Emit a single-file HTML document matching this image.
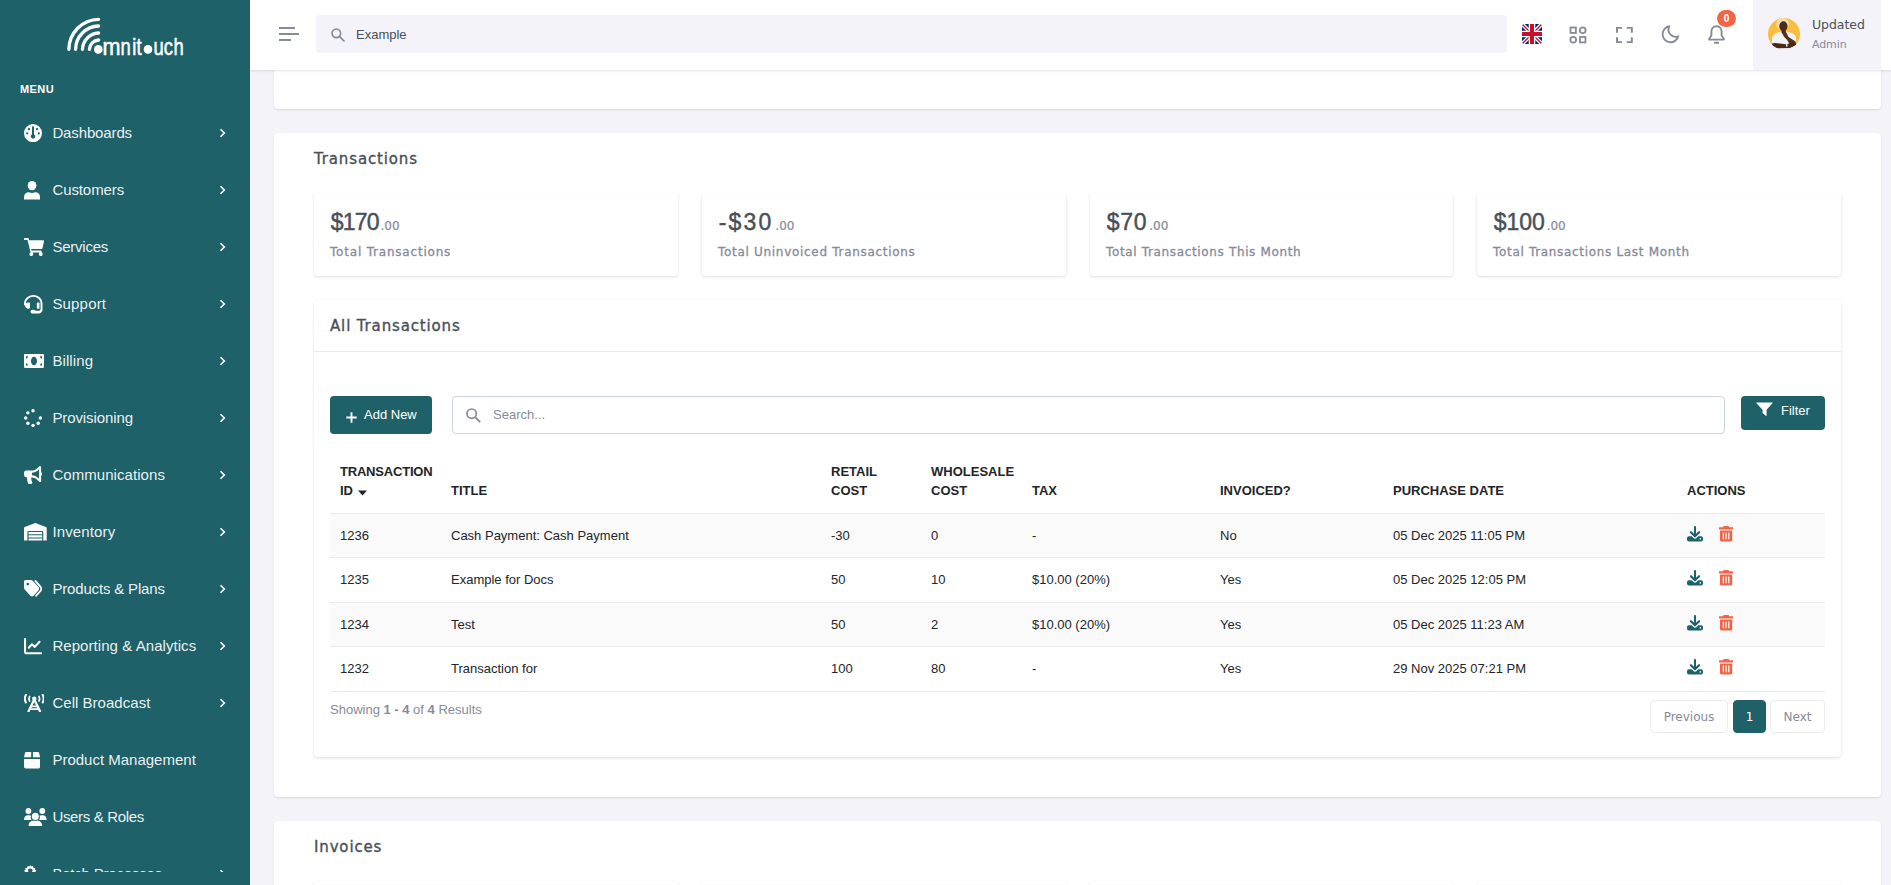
<!DOCTYPE html>
<html lang="en">
<head>
<meta charset="utf-8">
<title>Omnitouch - Transactions</title>
<style>
*{box-sizing:border-box}
html,body{margin:0;padding:0}
html{width:1891px;height:885px;overflow:hidden}
body{width:1891px;height:885px;overflow:hidden;background:#f3f3f9;font-family:"Liberation Sans",Arial,sans-serif;font-size:13px;color:#212529;position:relative}
.pop{font-family:"DejaVu Sans","Liberation Sans",sans-serif}
/* ---------- sidebar ---------- */
#sidebar{position:absolute;left:0;top:0;width:250px;height:885px;background:#1f6169;overflow:hidden;z-index:5}
#logo{position:absolute;left:62px;top:12px;width:126px;height:50px}
#menu-title{position:absolute;left:20px;top:83px;font-size:11px;font-weight:700;letter-spacing:.4px;color:#fff;line-height:13px}
.nav{position:absolute;left:0;width:250px;height:24px}
.nav svg.ic{position:absolute;fill:#fff}
.nav span{position:absolute;left:52.400px;top:-.2px;line-height:24px;font-size:15px;color:rgba(255,255,255,.93);white-space:nowrap}
.nav svg.ch{position:absolute;left:218px;top:7px;width:9px;height:10px;fill:none;stroke:#fff;stroke-width:1.6}
/* ---------- topbar ---------- */
#topbar{position:absolute;left:250px;top:0;width:1641px;height:70px;background:#fff;box-shadow:0 1px 2px rgba(56,65,74,.15);z-index:4}
#ham{position:absolute;left:29px;top:27px;width:20px;height:14px}
#ham i{position:absolute;left:0;height:2px;background:#878a99;display:block}
#search{position:absolute;left:66px;top:15px;width:1191px;height:38px;background:#f3f3f9;border-radius:4px}
#search svg{position:absolute;left:14px;top:11.500px;width:16px;height:16px}
#search span{position:absolute;left:40px;top:1px;line-height:38px;font-size:13px;color:#495057}
.tb-ic{position:absolute;top:23px;width:24px;height:24px;fill:none;stroke:#878a99;stroke-width:2}
#user{position:absolute;left:1503px;top:0;width:128px;height:70px;background:#f3f3f9}
#avatar{position:absolute;left:15px;top:18px;width:32px;height:32px;border-radius:50%;overflow:hidden}
#uname{position:absolute;left:59px;top:16px;font-size:12.500px;line-height:18px;color:#495057;letter-spacing:-.05px}
#urole{position:absolute;left:59px;top:36.700px;font-size:11px;line-height:16px;color:#878a99;letter-spacing:-.1px}
#badge{position:absolute;left:1467px;top:9.500px;width:19px;height:17px;border-radius:9px;background:#f06548;color:#fff;font-size:10px;font-weight:700;text-align:center;line-height:17px}
/* ---------- content ---------- */
.card{position:absolute;background:#fff;border-radius:4px;box-shadow:0 1px 2px rgba(56,65,74,.15)}
.h5{position:absolute;font-size:15px;line-height:24px;color:#495057;letter-spacing:.85px;white-space:nowrap;-webkit-text-stroke:.35px #495057}
.stat{position:absolute;top:193px;width:364px;height:83px;background:#fff;border-radius:4px;box-shadow:0 1px 3px rgba(56,65,74,.18)}
.stat .v{position:absolute;left:16.700px;top:14px;font-family:'Liberation Sans',sans-serif;font-size:23px;line-height:30px;color:#495057;white-space:nowrap;letter-spacing:-.8px;-webkit-text-stroke:.45px #495057}
.stat .v small{font-family:'DejaVu Sans',sans-serif;font-size:12px;color:#878a99;letter-spacing:0;-webkit-text-stroke:.2px #878a99;margin-left:1.800px}
.stat .l{position:absolute;left:16px;top:50px;font-size:12px;line-height:18px;color:#878a99;white-space:nowrap;letter-spacing:.8px;-webkit-text-stroke:.3px #878a99}
.btn{position:absolute;background:#1f6169;color:#fff;border-radius:4px;font-size:13px;white-space:nowrap}
table{position:absolute;left:330px;top:452px;width:1495px;border-collapse:separate;border-spacing:0;table-layout:fixed}
th{font-weight:700;font-size:13px;text-align:left;vertical-align:bottom;padding:10px 10px 13px 10px;line-height:19px;height:62px;color:#212529;border-bottom:1px solid #e9ebec}
td{font-size:13px;padding:0 10px;height:44px;line-height:19px;vertical-align:middle;color:#212529;border-bottom:1px solid #e9ebec;white-space:nowrap}
tbody tr:nth-child(odd) td{background:#fafafa}
tbody tr:nth-child(even) td{height:45px}
td svg{vertical-align:middle;position:relative;top:-2.400px}
td svg.dl{margin-left:.2px}
td svg.trs{margin-left:16.100px}
tbody tr:nth-child(even) td{padding-bottom:1px}
.pg{position:absolute;top:700px;height:33px;border:1px solid #e9ebec;border-radius:4px;line-height:33px;text-align:center;font-size:12px;color:#878a99;background:#fff}
</style>
</head>
<body>

<!-- ================= SIDEBAR ================= -->
<div id="sidebar">
  <svg id="logo" viewBox="62 12 126 50" role="img" aria-label="omnitouch">
    <g fill="none" stroke="#fff" stroke-width="3.3" stroke-linecap="round">
      <path d="M68.900 49.300A30.200 30.200 0 0 1 98.600 19.300"/>
      <path d="M75.600 49.300A23.600 23.600 0 0 1 98.600 26"/>
      <path d="M82.500 49.300A16.800 16.800 0 0 1 98.600 33"/>
      <path d="M89.400 49.300A9.800 9.800 0 0 1 98.600 40"/>
    </g>
    <g transform="translate(94,54.600) scale(0.8,1)"><text font-family="Liberation Sans, sans-serif" font-size="23" fill="#fff" stroke="#fff" stroke-width=".550" stroke-linejoin="round"><tspan x="1.9" font-size="10" dy="-2">o</tspan><tspan x="10.7" dy="2" textLength="22.500" lengthAdjust="spacingAndGlyphs">m</tspan><tspan x="33.2">n</tspan><tspan x="47.7">i</tspan><tspan x="53.0">t</tspan><tspan x="64.0" font-size="10" dy="-2">o</tspan><tspan x="74.4" dy="2">u</tspan><tspan x="87.3">c</tspan><tspan x="99.4">h</tspan></text></g>
    <circle cx="98.300" cy="49.400" r="4.300" fill="#fff"/>
    <circle cx="148" cy="49.400" r="4.300" fill="#fff"/>
  </svg>
  <div id="menu-title">MENU</div>
  <div class="nav" style="top:121px"><svg class="ic" style="left:24px;top:3px;width:18px;height:18.3px" viewBox="1 1 18 18" preserveAspectRatio="none"><path fill-rule="evenodd" d="M10 1a9 9 0 1 0 0 18a9 9 0 0 0 0-18zM9 4.2a1 1 0 0 1 2 0v7.1a2.1 2.1 0 1 1-2 0zM4.2 9.2a1.1 1.1 0 1 1 0 2.2a1.1 1.1 0 0 1 0-2.2zM15.8 9.2a1.1 1.1 0 1 1 0 2.2a1.1 1.1 0 0 1 0-2.2zM6 5a1.1 1.1 0 1 1 0 2.2A1.1 1.1 0 0 1 6 5zM14 5a1.1 1.1 0 1 1 0 2.2A1.1 1.1 0 0 1 14 5z"/></svg><span style="letter-spacing:-0.13px">Dashboards</span><svg class="ch" viewBox="0 0 9 10"><path d="M2.500 1.200L6.300 5L2.500 8.800"/></svg></div>
  <div class="nav" style="top:178px"><svg class="ic" style="left:24px;top:3px;width:16.1px;height:18.6px" viewBox="2 1.3 16 17.3" preserveAspectRatio="none"><circle cx="10" cy="5.6" r="4.3"/><path d="M2 18.6v-2.2c0-2.6 2-4.6 4.6-4.6h.6c.9.4 1.800.6 2.800.6s1.900-.2 2.800-.6h.6c2.600 0 4.600 2 4.600 4.600v2.200z"/></svg><span style="letter-spacing:-0.09px">Customers</span><svg class="ch" viewBox="0 0 9 10"><path d="M2.500 1.200L6.300 5L2.500 8.800"/></svg></div>
  <div class="nav" style="top:235px"><svg class="ic" style="left:24px;top:3px;width:20px;height:18.1px" viewBox="0 2.6 20.02 16.6" preserveAspectRatio="none"><path d="M0.700 2.600h3.300c.4 0 .7.3.8.6l.3 1.400h14.100c.5 0 .9.500.8 1l-1.500 6.400c-.1.400-.4.600-.8.600H7.200l.3 1.500h9.400c.5 0 .9.500.8 1l-.1.500c.7.300 1.100 1 1.100 1.700 0 1-.800 1.900-1.900 1.900s-1.900-.800-1.900-1.900c0-.500.200-1 .6-1.300H8.700c.4.300.6.800.6 1.300 0 1-.800 1.900-1.900 1.900s-1.900-.800-1.900-1.900c0-.700.400-1.300 1-1.600L3.500 4.500H.7c-.4 0-.7-.3-.7-.7v-.5c0-.4.300-.7.700-.7z"/></svg><span style="letter-spacing:-0.23px">Services</span><svg class="ch" viewBox="0 0 9 10"><path d="M2.500 1.200L6.300 5L2.500 8.800"/></svg></div>
  <div class="nav" style="top:292px"><svg class="ic" style="left:24px;top:3.2px;width:18.5px;height:18.5px" viewBox="1 1.2 17.8 19.2" preserveAspectRatio="none"><path fill-rule="evenodd" d="M10 1.200C5 1.200 1.200 5.200 1 10v1.200c0 .3.100.5.400.6l.7.400v.1c0 1.700 1.400 3.100 3.100 3.100h.600c.5 0 .9-.4.900-.9V9.900c0-.5-.4-.9-.9-.9h-.600c-.9 0-1.700.400-2.300 1C3.100 6.200 6.200 3.100 10 3.100s6.900 3.100 6.900 6.900v5.600c0 1-.8 1.900-1.900 1.900h-3c-.3-.6-.9-.9-1.600-.9h-1.200c-1 0-1.900.800-1.900 1.900s.800 1.900 1.900 1.900H15c2.100 0 3.800-1.700 3.800-3.800V10C18.800 5.200 15 1.200 10 1.200zM13.300 9.900v4.600c0 .5.400.9.900.9h.6c.4 0 .700-.100 1.100-.200V9.200c-.3-.100-.700-.200-1.100-.200h-.6c-.5 0-.9.400-.9.900z"/></svg><span style="letter-spacing:0.18px">Support</span><svg class="ch" viewBox="0 0 9 10"><path d="M2.500 1.200L6.300 5L2.500 8.800"/></svg></div>
  <div class="nav" style="top:349px"><svg class="ic" style="left:24px;top:5.4px;width:20px;height:13.9px" viewBox="0 4 20 12" preserveAspectRatio="none"><path fill-rule="evenodd" d="M1 4h18c.6 0 1 .4 1 1v10c0 .6-.4 1-1 1H1c-.6 0-1-.4-1-1V5c0-.6.400-1 1-1zM2 12v2h2c0-1.100-.900-2-2-2zM2 6v2c1.100 0 2-.900 2-2zM18 12c-1.100 0-2 .900-2 2h2zM16 6c0 1.100.900 2 2 2V6zM10 6.300c-1.700 0-3 1.700-3 3.700s1.300 3.700 3 3.700 3-1.700 3-3.700-1.300-3.700-3-3.700z"/></svg><span style="letter-spacing:0.1px">Billing</span><svg class="ch" viewBox="0 0 9 10"><path d="M2.500 1.200L6.300 5L2.500 8.800"/></svg></div>
  <div class="nav" style="top:406px"><svg class="ic" style="left:24px;top:3.1px;width:18.1px;height:18.1px" viewBox="1.1 1.1 17.8 17.8" preserveAspectRatio="none"><circle cx="10" cy="2.800" r="1.700"/><circle cx="10" cy="17.200" r="1.700"/><circle cx="2.800" cy="10" r="1.700"/><circle cx="17.200" cy="10" r="1.700"/><circle cx="4.900" cy="4.900" r="1.700"/><circle cx="15.100" cy="15.100" r="1.700"/><circle cx="4.900" cy="15.100" r="1.700"/></svg><span style="letter-spacing:-0.09px">Provisioning</span><svg class="ch" viewBox="0 0 9 10"><path d="M2.500 1.200L6.300 5L2.500 8.800"/></svg></div>
  <div class="nav" style="top:463px"><svg class="ic" style="left:24px;top:3.1px;width:18.1px;height:17.9px" viewBox="0 1.2 19.8 17.5" preserveAspectRatio="none"><path d="M19.800 8.900c0-.8-.5-1.500-1.100-1.900V2.300c0-.3-.2-1.100-1.100-1.100-.2 0-.5.100-.7.200l-2.900 2.400C12.500 4.900 10.600 5.600 8.700 5.600H2.200C1 5.600 0 6.600 0 7.800v2.200c0 1.200 1 2.200 2.200 2.200h1.200c0 .4-.1.700-.1 1.100 0 1.700.4 3.300 1.100 4.800.2.400.6.600 1 .6h2.600c.9 0 1.400-1 .9-1.800-.6-.9-1-2.100-1-3.400 0-.4.100-.8.100-1.100h.7c1.900 0 3.800.7 5.300 1.900l2.900 2.400c.2.200.4.200.7.200.9 0 1.100-.8 1.100-1.100v-4.900c.7-.4 1.100-1.100 1.100-1.900zm-3.300 4.700l-1.100-.9c-1.900-1.500-4.300-2.400-6.700-2.400V7.800c2.400 0 4.800-.9 6.700-2.400l1.100-.9z"/></svg><span style="letter-spacing:0.06px">Communications</span><svg class="ch" viewBox="0 0 9 10"><path d="M2.500 1.200L6.300 5L2.500 8.800"/></svg></div>
  <div class="nav" style="top:520px"><svg class="ic" style="left:24px;top:3.1px;width:22.7px;height:17.6px" viewBox="0 1.45 20.0 16.55" preserveAspectRatio="none"><path d="M15.700 10H4.300c-.2 0-.3.100-.3.300v1.700h12v-1.700c0-.2-.1-.3-.3-.3zM16 13H4v2h12zM16 16H4v2h12zM19.400 5.200L10.600 1.600c-.4-.2-.8-.2-1.200 0L.6 5.200C.2 5.400 0 5.800 0 6.200v11.500c0 .2.100.3.300.3h2.400c.2 0 .3-.1.300-.3V10c0-.6.500-1 1-1h12c.6 0 1 .5 1 1v7.700c0 .2.100.3.300.3h2.400c.2 0 .3-.1.300-.3V6.200c0-.400-.2-.800-.6-1z"/></svg><span style="letter-spacing:0.14px">Inventory</span><svg class="ch" viewBox="0 0 9 10"><path d="M2.500 1.200L6.300 5L2.500 8.800"/></svg></div>
  <div class="nav" style="top:577px"><svg class="ic" style="left:24px;top:3.4px;width:18.1px;height:16.8px" viewBox="0 0 20.12 17.2" preserveAspectRatio="none"><path fill-rule="evenodd" d="M0 1.800C0 .8.800 0 1.800 0h6.100c.7 0 1.300.3 1.800.7l6.300 6.400c1 1 1 2.600 0 3.600l-5.300 5.300c-1 1-2.600 1-3.600 0L.8 9.700C.3 9.200 0 8.600 0 7.900zM4.200 5.600a1.400 1.400 0 1 0 0-2.800 1.400 1.400 0 0 0 0 2.800z"/><path d="M12 .3c.4-.4 1-.4 1.400 0l5.600 5.900c1.500 1.600 1.500 4 0 5.600l-4.900 5.100c-.4.400-1 .4-1.400 0s-.4-1 0-1.400l4.900-5.100c.8-.8.800-2 0-2.800L12 1.700c-.4-.4-.4-1 0-1.400z"/></svg><span style="letter-spacing:-0.17px">Products &amp; Plans</span><svg class="ch" viewBox="0 0 9 10"><path d="M2.500 1.200L6.300 5L2.500 8.800"/></svg></div>
  <div class="nav" style="top:634px"><svg class="ic" style="left:24px;top:4.3px;width:18.1px;height:16.3px" viewBox="-0.05 0.35 20.2 18.2" preserveAspectRatio="none"><path d="M1.100 1.500V15.300Q1.100 17.400 3.200 17.400H19" fill="none" stroke="#fff" stroke-width="2.300" stroke-linecap="round" stroke-linejoin="round"/><path d="M5.300 11.200L8.800 7.400L12 10.300L17.300 4.600" fill="none" stroke="#fff" stroke-width="2.300" stroke-linecap="round" stroke-linejoin="round"/></svg><span style="letter-spacing:0.06px">Reporting &amp; Analytics</span><svg class="ch" viewBox="0 0 9 10"><path d="M2.500 1.200L6.300 5L2.500 8.800"/></svg></div>
  <div class="nav" style="top:691px"><svg class="ic" style="left:23.900px;top:2.900px;width:20.600px;height:18.400px" viewBox="0 0 20.600 18.400"><g fill="none" stroke="#fff" stroke-linecap="round"><path d="M1.900 1Q-.2 4.700 1.900 8.400M18.700 1Q20.800 4.700 18.700 8.400" stroke-width="2.100"/><path d="M5.600 2.400Q4.300 4.700 5.600 7M15 2.400Q16.300 4.700 15 7" stroke-width="1.700"/><path d="M10.300 5.500L4.600 17.300M10.300 5.500L16 17.300" stroke-width="2.300"/><path d="M7.400 12.300H13.200M5.900 15.200H14.700" stroke-width="1.700"/></g><circle cx="10.300" cy="4.700" r="2.200"/></svg><span style="letter-spacing:0.03px">Cell Broadcast</span><svg class="ch" viewBox="0 0 9 10"><path d="M2.500 1.200L6.300 5L2.500 8.800"/></svg></div>
  <div class="nav" style="top:748px"><svg class="ic" style="left:24px;top:4px;width:16.1px;height:16.6px" viewBox="0 0 20 20" preserveAspectRatio="none"><path d="M2.600 0H8.900V6.300H0L1.200 1.200Q1.500 0 2.600 0ZM11.100 0H17.400Q18.500 0 18.800 1.200L20 6.300H11.100ZM0 8.500H20V17.500Q20 20 17.500 20H2.500Q0 20 0 17.500Z"/></svg><span style="letter-spacing:0px">Product Management</span></div>
  <div class="nav" style="top:805px"><svg class="ic" style="left:24px;top:2.9px;width:22.7px;height:18.3px" viewBox="0 0.4 22.7 17.9" preserveAspectRatio="none"><circle cx="4.400" cy="3.300" r="2.900"/><circle cx="18.300" cy="3.300" r="2.900"/><path d="M0 11.600C0 9 1.900 7.500 4 7.500h1.300c.7 0 1.400.2 2 .5-.9 1.400-.6 3 .4 4.200H.900C.4 12.200 0 12 0 11.600z"/><path d="M22.700 11.600c0-2.600-1.900-4.100-4-4.100h-1.300c-.7 0-1.400.2-2 .5.900 1.400.6 3-.4 4.200h6.800c.5 0 .9-.2.900-.6z"/><circle cx="11.350" cy="8.600" r="3.500"/><path d="M4.600 17.400c0-2.600 2.100-4.500 4.700-4.500h4.100c2.600 0 4.700 1.900 4.700 4.500 0 .5-.4.900-.9.900H5.500c-.5 0-.9-.4-.9-.9z"/></svg><span style="letter-spacing:-0.34px">Users &amp; Roles</span></div>
  <div class="nav" style="top:862px"><svg class="ic" style="left:24px;top:3.2px;width:12.500px;height:13.500px" viewBox="2.1 2 15.8 19.3" preserveAspectRatio="none"><path d="M10 2l1 2.200 2.300-.8.600 2.400 2.400.4-.5 2.300 2.100 1.200-1.400 2 1.400 2-2.100 1.100.5 2.400-2.400.4-.6 2.300-2.300-.7-1 2.100-1-2.100-2.300.7-.6-2.300-2.400-.4.500-2.400-2.100-1.100 1.400-2-1.400-2 2.100-1.200-.5-2.300 2.400-.4.600-2.400 2.300.8zM10 7a3 3 0 1 0 0 6 3 3 0 0 0 0-6z" fill-rule="evenodd"/></svg><span style="letter-spacing:-.2px">Batch Processes</span><svg class="ch" viewBox="0 0 9 10"><path d="M2.500 1.200L6.300 5L2.500 8.800"/></svg></div>
  <div style="position:absolute;left:0;top:872px;width:250px;height:13px;background:#1f6169"></div>
</div>

<!-- ================= TOPBAR ================= -->
<div id="topbar">
  <div id="ham"><i style="top:0;width:16px"></i><i style="top:6px;width:20px"></i><i style="top:12px;width:12px"></i></div>
  <div id="search">
    <svg viewBox="0 0 24 24"><circle cx="9.5" cy="9.5" r="6.5" fill="none" stroke="#878a99" stroke-width="2.4"/><path d="M14.5 14.5 L21 21" stroke="#878a99" stroke-width="2.6" stroke-linecap="round"/></svg>
    <span>Example</span>
  </div>
  <svg style="position:absolute;left:1272px;top:24px;width:20px;height:20px;border-radius:3px" viewBox="0 0 20 20">
    <rect width="20" height="20" fill="#012169"/>
    <path d="M0 0L20 20M20 0L0 20" stroke="#fff" stroke-width="4"/>
    <path d="M0 0L20 20M20 0L0 20" stroke="#c8102e" stroke-width="1.400"/>
    <path d="M10 0V20M0 10H20" stroke="#fff" stroke-width="6.600"/>
    <path d="M10 0V20M0 10H20" stroke="#c8102e" stroke-width="4"/>
  </svg>
  <svg style="position:absolute;left:1319px;top:26px;width:18px;height:18px" viewBox="0 0 18 18" fill="none" stroke="#878a99" stroke-width="1.800">
    <rect x="1.500" y="1.500" width="5.400" height="5.400"/><circle cx="13.700" cy="4.200" r="2.900"/><circle cx="4.200" cy="13.700" r="2.900"/><rect x="11" y="11" width="5.400" height="5.400"/>
  </svg>
  <svg style="position:absolute;left:1365px;top:26px;width:18.800px;height:18px" viewBox="0 0 18 18" preserveAspectRatio="none" fill="none" stroke="#878a99" stroke-width="1.900">
    <path d="M1.900 6.800V1.900H6.800M11.200 1.900H16.100V6.800M16.100 11.200V16.100H11.200M6.800 16.100H1.900V11.200"/>
  </svg>
  <svg style="position:absolute;left:1410px;top:24px;width:20px;height:20px" viewBox="0 0 20 20" fill="none" stroke="#878a99" stroke-width="1.900" stroke-linejoin="round">
    <path d="M9.300 2.300A8 8 0 1 0 18.300 12.300A7.200 7.200 0 0 1 9.300 2.300Z"/>
  </svg>
  <svg style="position:absolute;left:1457px;top:24px;width:19px;height:21px" viewBox="0 0 19 21" fill="none" stroke="#878a99" stroke-width="1.900" stroke-linejoin="round" stroke-linecap="round">
    <path d="M9.500 2.200C6.200 2.200 4.400 4.700 4.400 7.600V11.500L2.200 14.800V15.600H16.800V14.800L14.600 11.500V7.600C14.600 4.700 12.800 2.200 9.500 2.200Z"/>
    <path d="M7.800 18.700H11.200"/>
  </svg>
  <div id="user">
    <div id="avatar"><svg viewBox="0 0 32 32" width="32" height="32"><rect width="32" height="32" fill="#fabd3d"/><ellipse cx="14.600" cy="6" rx="6.300" ry="6.200" fill="#f2deb6"/><ellipse cx="15.400" cy="8.200" rx="4.100" ry="5" fill="#4b2b1b"/><path d="M4 32V21Q4.300 16 9.500 14.800L13 13.800H19L23 14.800Q27.800 16 28.200 21V32Z" fill="#f3f3f6"/><path d="M13.600 12H17.800V15Q15.700 17 13.600 15Z" fill="#4b2b1b"/><path d="M14.300 13.800Q16.800 12.200 18.300 14.600L20.500 19L27.500 23.500L28.500 27L23.500 29L18.800 21.500Q14 17.500 14.300 13.800Z" fill="#54301e"/><path d="M3.500 25.800Q6 24.300 10 25.300L18 26.200L25 24.500L28.500 26.500L22 30L10 30.300L4.500 29Z" fill="#482818"/><path d="M17.800 25.600L19.300 25.400L19.700 28.500L18.200 28.700Z" fill="#e5e5e5"/></svg></div>
    <div id="uname" class="pop">Updated</div>
    <div id="urole" class="pop">Admin</div>
  </div>
  <div id="badge">0</div>
</div>

<!-- ================= CONTENT ================= -->
<div class="card" style="left:274px;top:50px;width:1607px;height:59px"></div>

<div class="card" style="left:274px;top:133px;width:1607px;height:664px"></div>
<div class="h5 pop" style="left:314px;top:147px">Transactions</div>

<div class="stat" style="left:314px"><div class="v">$170<small>.00</small></div><div class="l pop">Total Transactions</div></div>
<div class="stat" style="left:702px"><div class="v" style="letter-spacing:2.200px">-$30<small>.00</small></div><div class="l pop" style="letter-spacing:.7px">Total Uninvoiced Transactions</div></div>
<div class="stat" style="left:1090px;width:363px"><div class="v" style="letter-spacing:.800px">$70<small>.00</small></div><div class="l pop" style="letter-spacing:.65px">Total Transactions This Month</div></div>
<div class="stat" style="left:1477px"><div class="v" style="letter-spacing:0">$100<small>.00</small></div><div class="l pop" style="letter-spacing:.68px">Total Transactions Last Month</div></div>

<div class="card" style="left:314px;top:300px;width:1527px;height:457px;box-shadow:0 1px 3px rgba(56,65,74,.18)"></div>
<div class="h5 pop" style="left:330px;top:314px">All Transactions</div>
<div style="position:absolute;left:314px;top:351px;width:1527px;height:1px;background:#e9ebec"></div>

<div class="btn" style="left:330px;top:396px;width:102px;height:38px;line-height:38px"><svg style="position:absolute;left:15.500px;top:16.300px;width:11px;height:11px" viewBox="0 0 10 10"><path d="M5 .3V9.700M.3 5H9.700" stroke="#fff" stroke-width="1.700" fill="none"/></svg><span style="position:absolute;left:34px;top:0">Add New</span></div>
<div style="position:absolute;left:452px;top:396px;width:1273px;height:38px;border:1px solid #ced4da;border-radius:4px;background:#fff">
  <svg style="position:absolute;left:11.500px;top:10.300px;width:16px;height:16px" viewBox="0 0 24 24"><circle cx="10" cy="10" r="7" fill="none" stroke="#878a99" stroke-width="2.6"/><path d="M15.5 15.5 L22 22" stroke="#878a99" stroke-width="2.8" stroke-linecap="round"/></svg>
  <span style="position:absolute;left:40px;top:0;line-height:36px;color:#878a99;font-size:13px">Search...</span>
</div>
<div class="btn" style="left:1741px;top:396px;width:84px;height:34px;line-height:30px">
  <svg style="position:absolute;left:15px;top:6px;width:17px;height:15px" viewBox="0 0 17 15"><path d="M0.8 0.5 H16.2 Q17 0.5 16.5 1.2 L10.6 7.8 V13.2 Q10.6 14.4 9.8 13.7 L6.9 11.3 Q6.5 11 6.5 10.5 V7.8 L0.5 1.2 Q0 0.5 0.8 0.5Z" fill="#fff"/></svg>
  <span style="position:absolute;left:40px;top:0">Filter</span>
</div>

<table>
<colgroup><col style="width:111px"><col style="width:380px"><col style="width:100px"><col style="width:101px"><col style="width:188px"><col style="width:173px"><col style="width:294px"><col style="width:148px"></colgroup>
<thead><tr>
<th><span style="letter-spacing:-.2px">TRANSACTION</span><br>ID <svg width="9" height="6" viewBox="0 0 9 6" style="margin-left:1px;position:relative;top:1px"><path d="M0 0.5H9L4.5 5.5Z" fill="#212529"/></svg></th>
<th>TITLE</th><th>RETAIL<br>COST</th><th>WHOLESALE<br>COST</th><th>TAX</th><th>INVOICED?</th><th>PURCHASE DATE</th><th>ACTIONS</th>
</tr></thead>
<tbody>
<tr><td>1236</td><td>Cash Payment: Cash Payment</td><td>-30</td><td>0</td><td>-</td><td>No</td><td>05 Dec 2025 11:05 PM</td><td class="act"><svg class="dl" width="16" height="15.500" viewBox="0 0 16 15.500"><path fill="none" stroke="#1f6169" stroke-width="2.100" stroke-linecap="round" stroke-linejoin="round" d="M8 1.100V9.800M3.900 6.200L8 10.300L12.100 6.200"/><path fill="#1f6169" d="M2 10.300H4.700L6.500 12.100Q8 13.400 9.500 12.100L11.300 10.300H14Q16 10.300 16 12.300V13.500Q16 15.500 14 15.500H2Q0 15.500 0 13.500V12.300Q0 10.300 2 10.300Z"/><circle cx="13.300" cy="12.900" r=".800" fill="#fff"/></svg><svg class="trs" width="14.200" height="15.500" viewBox="0 0 15 17" preserveAspectRatio="none"><path fill="#f06548" d="M1 4.800h13v10.600c0 .9-.7 1.600-1.600 1.600H2.600C1.700 17 1 16.300 1 15.400zM4 7.200v7.400h1.300V7.200zM6.850 7.200v7.400h1.300V7.200zM9.700 7.200v7.400H11V7.200z" fill-rule="evenodd"/><path fill="#f06548" d="M.5 1.500h3.600L4.600.500c.1-.3.400-.5.700-.5h4.400c.3 0 .6.200.7.500l.5 1h3.600c.3 0 .5.200.5.500v1.300c0 .3-.2.500-.5.500H.5c-.3 0-.5-.2-.5-.5V2c0-.3.200-.5.500-.5z"/></svg></td></tr>
<tr><td>1235</td><td>Example for Docs</td><td>50</td><td>10</td><td>$10.00 (20%)</td><td>Yes</td><td>05 Dec 2025 12:05 PM</td><td class="act"><svg class="dl" width="16" height="15.500" viewBox="0 0 16 15.500"><path fill="none" stroke="#1f6169" stroke-width="2.100" stroke-linecap="round" stroke-linejoin="round" d="M8 1.100V9.800M3.900 6.200L8 10.300L12.100 6.200"/><path fill="#1f6169" d="M2 10.300H4.700L6.500 12.100Q8 13.400 9.500 12.100L11.300 10.300H14Q16 10.300 16 12.300V13.500Q16 15.500 14 15.500H2Q0 15.500 0 13.500V12.300Q0 10.300 2 10.300Z"/><circle cx="13.300" cy="12.900" r=".800" fill="#fff"/></svg><svg class="trs" width="14.200" height="15.500" viewBox="0 0 15 17" preserveAspectRatio="none"><path fill="#f06548" d="M1 4.800h13v10.600c0 .9-.7 1.600-1.600 1.600H2.600C1.700 17 1 16.300 1 15.400zM4 7.200v7.400h1.300V7.200zM6.850 7.200v7.400h1.300V7.200zM9.700 7.200v7.400H11V7.200z" fill-rule="evenodd"/><path fill="#f06548" d="M.5 1.500h3.600L4.600.500c.1-.3.400-.5.700-.5h4.400c.3 0 .6.200.7.500l.5 1h3.600c.3 0 .5.200.5.500v1.300c0 .3-.2.500-.5.500H.5c-.3 0-.5-.2-.5-.5V2c0-.3.200-.5.500-.5z"/></svg></td></tr>
<tr><td>1234</td><td>Test</td><td>50</td><td>2</td><td>$10.00 (20%)</td><td>Yes</td><td>05 Dec 2025 11:23 AM</td><td class="act"><svg class="dl" width="16" height="15.500" viewBox="0 0 16 15.500"><path fill="none" stroke="#1f6169" stroke-width="2.100" stroke-linecap="round" stroke-linejoin="round" d="M8 1.100V9.800M3.900 6.200L8 10.300L12.100 6.200"/><path fill="#1f6169" d="M2 10.300H4.700L6.500 12.100Q8 13.400 9.500 12.100L11.300 10.300H14Q16 10.300 16 12.300V13.500Q16 15.500 14 15.500H2Q0 15.500 0 13.500V12.300Q0 10.300 2 10.300Z"/><circle cx="13.300" cy="12.900" r=".800" fill="#fff"/></svg><svg class="trs" width="14.200" height="15.500" viewBox="0 0 15 17" preserveAspectRatio="none"><path fill="#f06548" d="M1 4.800h13v10.600c0 .9-.7 1.600-1.600 1.600H2.600C1.700 17 1 16.300 1 15.400zM4 7.200v7.400h1.300V7.200zM6.850 7.200v7.400h1.300V7.200zM9.700 7.200v7.400H11V7.200z" fill-rule="evenodd"/><path fill="#f06548" d="M.5 1.500h3.600L4.600.500c.1-.3.400-.5.700-.5h4.400c.3 0 .6.200.7.500l.5 1h3.600c.3 0 .5.200.5.500v1.300c0 .3-.2.500-.5.500H.5c-.3 0-.5-.2-.5-.5V2c0-.3.200-.5.500-.5z"/></svg></td></tr>
<tr><td>1232</td><td>Transaction for</td><td>100</td><td>80</td><td>-</td><td>Yes</td><td>29 Nov 2025 07:21 PM</td><td class="act"><svg class="dl" width="16" height="15.500" viewBox="0 0 16 15.500"><path fill="none" stroke="#1f6169" stroke-width="2.100" stroke-linecap="round" stroke-linejoin="round" d="M8 1.100V9.800M3.900 6.200L8 10.300L12.100 6.200"/><path fill="#1f6169" d="M2 10.300H4.700L6.500 12.100Q8 13.400 9.500 12.100L11.300 10.300H14Q16 10.300 16 12.300V13.500Q16 15.500 14 15.500H2Q0 15.500 0 13.500V12.300Q0 10.300 2 10.300Z"/><circle cx="13.300" cy="12.900" r=".800" fill="#fff"/></svg><svg class="trs" width="14.200" height="15.500" viewBox="0 0 15 17" preserveAspectRatio="none"><path fill="#f06548" d="M1 4.800h13v10.600c0 .9-.7 1.600-1.600 1.600H2.600C1.700 17 1 16.300 1 15.400zM4 7.200v7.400h1.300V7.200zM6.850 7.200v7.400h1.300V7.200zM9.700 7.200v7.400H11V7.200z" fill-rule="evenodd"/><path fill="#f06548" d="M.5 1.500h3.600L4.600.500c.1-.3.400-.5.700-.5h4.400c.3 0 .6.200.7.500l.5 1h3.600c.3 0 .5.200.5.500v1.300c0 .3-.2.500-.5.500H.5c-.3 0-.5-.2-.5-.5V2c0-.3.200-.5.500-.5z"/></svg></td></tr>
</tbody>
</table>

<div style="position:absolute;left:330px;top:700px;line-height:19px;font-size:13px;color:#878a99">Showing <b>1 - 4</b> of <b>4</b> Results</div>
<div class="pg pop" style="left:1650px;width:78px">Previous</div>
<div class="pg pop" style="left:1733px;width:33px;background:#1f6169;border-color:#1f6169;color:#fff">1</div>
<div class="pg pop" style="left:1770px;width:55px">Next</div>

<div class="card" style="left:274px;top:821px;width:1607px;height:64px;border-radius:4px 4px 0 0"></div>
<div class="h5 pop" style="left:314px;top:835px">Invoices</div>
<div class="stat" style="left:314px;top:881px;width:364px;height:4px;border-radius:4px 4px 0 0"></div><div class="stat" style="left:702px;top:881px;width:364px;height:4px;border-radius:4px 4px 0 0"></div><div class="stat" style="left:1090px;top:881px;width:363px;height:4px;border-radius:4px 4px 0 0"></div><div class="stat" style="left:1477px;top:881px;width:364px;height:4px;border-radius:4px 4px 0 0"></div>

</body>
</html>
